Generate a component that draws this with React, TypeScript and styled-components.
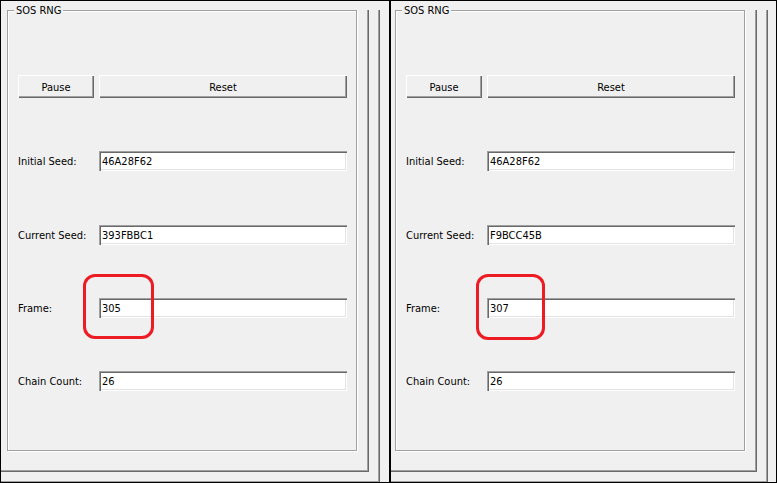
import React from "react";
import styled, { createGlobalStyle } from "styled-components";

const Global = createGlobalStyle`
  html, body { margin: 0; padding: 0; background: #ffffff; }
  body { font-family: Tahoma, "DejaVu Sans Condensed", "Liberation Sans", sans-serif; font-size: 11px; color: #000; }
`;

const Page = styled.div`
  display: flex;
  width: 777px;
  height: 483px;
`;

const Shot = styled.div<{ $w: number }>`
  position: relative;
  box-sizing: border-box;
  width: ${(p) => p.$w}px;
  height: 483px;
  border: 1px solid #000;
  background: #f0f0f0;
  overflow: hidden;
  flex: none;
`;

const Canvas = styled.div<{ $shift: number }>`
  width: 388px;
  margin-left: ${(p) => p.$shift}px;
`;

const Frame = styled.div<{ $w: number; $h: number }>`
  box-sizing: border-box;
  width: ${(p) => p.$w}px;
  height: ${(p) => p.$h}px;
  box-shadow: inset -1px -1px 0 #696969, inset -2px -2px 0 #a0a0a0;
`;

const GroupBox = styled.div`
  box-sizing: border-box;
  width: 350px;
  height: 441px;
  margin: 9px 0 0 6px;
  padding: 0 9px 0 10px;
  border: 1px solid #a0a0a0;
  box-shadow: inset 1px 1px 0 #ffffff, 1px 1px 0 #ffffff;
  display: flex;
  flex-direction: column;
`;

const Legend = styled.div`
  align-self: flex-start;
  margin: -7px 0 0 -4px;
  padding: 0 2px;
  height: 13px;
  line-height: 13px;
  background: #f0f0f0;
  white-space: nowrap;
`;

const ButtonRow = styled.div`
  display: flex;
  gap: 5px;
  margin-top: 58px;
`;

const Button = styled.div<{ $w?: number }>`
  box-sizing: border-box;
  height: 23px;
  padding-top: 1px;
  ${(p) => (p.$w ? `width: ${p.$w}px; flex: none;` : `flex: 1;`)}
  display: flex;
  align-items: center;
  justify-content: center;
  background: #f0f0f0;
  box-shadow: inset 1px 1px 0 #ffffff, inset -1px -1px 0 #696969,
    inset -2px -2px 0 #a0a0a0;
`;

const FieldRow = styled.div<{ $top: number }>`
  display: flex;
  align-items: center;
  height: 20px;
  margin-top: ${(p) => p.$top}px;
`;

const Label = styled.div`
  width: 81px;
  flex: none;
  padding-top: 1px;
  white-space: nowrap;
`;

const TextBox = styled.div`
  box-sizing: border-box;
  width: 248px;
  height: 20px;
  padding: 1px 0 0 3px;
  line-height: 19px;
  background: #ffffff;
  box-shadow: inset 1px 1px 0 #a0a0a0, inset 2px 2px 0 #696969,
    inset -1px -1px 0 #ffffff, inset -2px -2px 0 #e3e3e3;
`;

const Ring = styled.div<{ $l: number; $t: number; $w: number; $h: number }>`
  position: absolute;
  box-sizing: border-box;
  left: ${(p) => p.$l}px;
  top: ${(p) => p.$t}px;
  width: ${(p) => p.$w}px;
  height: ${(p) => p.$h}px;
  border: 3px solid #ed1c24;
  border-radius: 12px;
`;

type PanelProps = {
  width: number;
  shift: number;
  current: string;
  frame: string;
  ring: { l: number; t: number; w: number; h: number };
};

const fieldTops = [53, 54, 53, 53];

function Panel({ width, shift, current, frame, ring }: PanelProps) {
  const fields = [
    ["Initial Seed:", "46A28F62"],
    ["Current Seed:", current],
    ["Frame:", frame],
    ["Chain Count:", "26"],
  ];
  return (
    <Shot $w={width}>
      <Canvas $shift={shift}>
        <Frame $w={379} $h={473}>
          <Frame $w={368} $h={462}>
            <GroupBox>
              <Legend>SOS RNG</Legend>
              <ButtonRow>
                <Button $w={76}>Pause</Button>
                <Button>Reset</Button>
              </ButtonRow>
              {fields.map(([label, value], i) => (
                <FieldRow key={label} $top={fieldTops[i]}>
                  <Label>{label}</Label>
                  <TextBox>{value}</TextBox>
                </FieldRow>
              ))}
            </GroupBox>
          </Frame>
        </Frame>
      </Canvas>
      <Ring $l={ring.l} $t={ring.t} $w={ring.w} $h={ring.h} />
    </Shot>
  );
}

export default function App() {
  return (
    <>
      <Global />
      <Page>
        <Panel
          width={390}
          shift={0}
          current="393FBBC1"
          frame="305"
          ring={{ l: 82, t: 273, w: 71, h: 65 }}
        />
        <Panel
          width={387}
          shift={-2}
          current="F9BCC45B"
          frame="307"
          ring={{ l: 85, t: 273, w: 69, h: 66 }}
        />
      </Page>
    </>
  );
}
